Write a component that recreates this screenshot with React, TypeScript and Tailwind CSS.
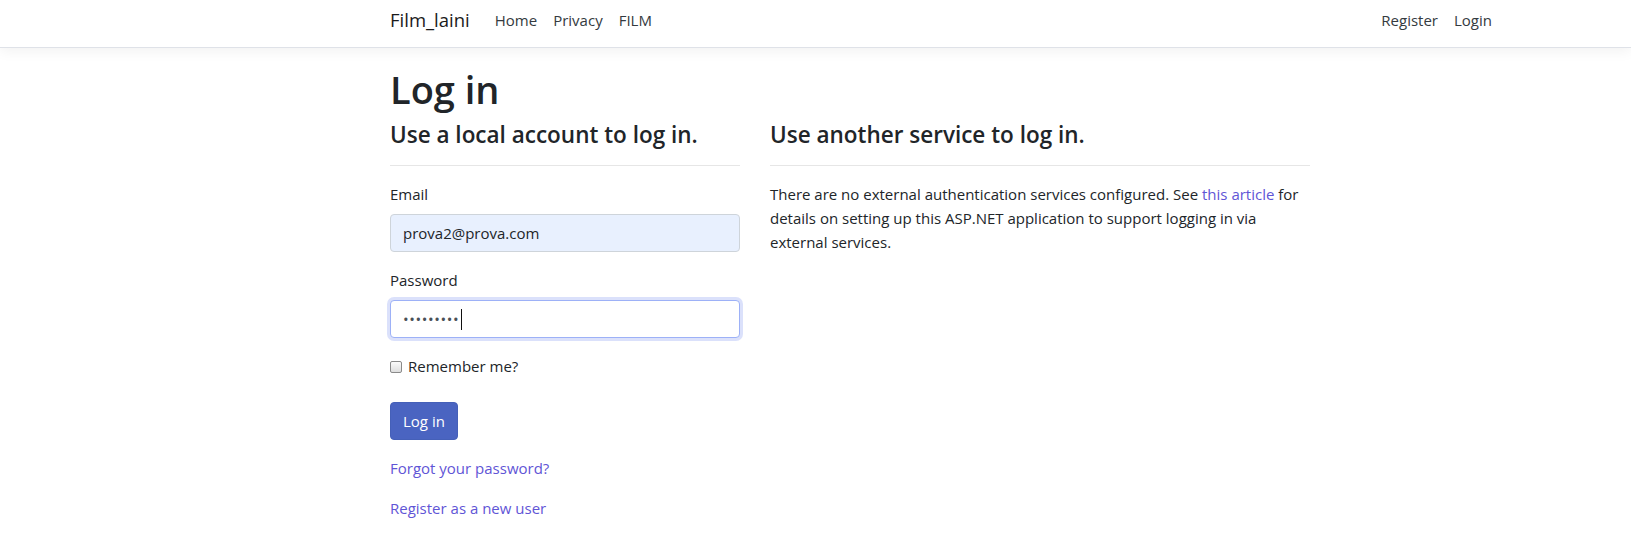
import React from "react";

const font = { fontFamily: '"Open Sans", "Noto Sans", Arial, sans-serif' };

export default function App() {
  return (
    <div className="min-h-[548px] bg-white text-[#212529] text-[15px] leading-[24px]" style={font}>
      <nav className="h-[48px] bg-white border-b border-[#dfe2e8] shadow-[0_4px_12px_rgba(0,0,0,0.05)]">
        <div className="ml-[375px] w-[1140px] px-[15px] h-full flex items-center pb-[8px]">
          <span className="text-[18.5px] leading-[28px] text-[#1a1a1a] mr-[17px]">Film_laini</span>
          <div className="flex items-center">
            <a className="px-[8px] text-[#343a40]">Home</a>
            <a className="px-[8px] text-[#343a40]">Privacy</a>
            <a className="px-[8px] text-[#343a40]">FILM</a>
          </div>
          <div className="ml-auto flex items-center">
            <a className="px-[8px] text-[#343a40]">Register</a>
            <a className="px-[8px] text-[#343a40]">Login</a>
          </div>
        </div>
      </nav>

      <main className="ml-[375px] w-[1140px] px-[15px] pt-[18px]">
        <h1 className="text-[38px] leading-[46px] font-semibold mb-[8px]">Log in</h1>
        <div className="flex gap-[30px]">
          <section className="w-[350px]">
            <h4 className="text-[22.5px] leading-[29px] font-semibold">Use a local account to log in.</h4>
            <hr className="mt-[16px] mb-[16px] border-0 border-t border-[#e6e6e6]" />
            <div className="mb-[16px]">
              <div className="mb-[8px]">Email</div>
              <div className="h-[38px] rounded-[4px] border border-[#ced4da] bg-[#e8f0fe] px-[12px] flex items-center text-[#212529]">
                prova2@prova.com
              </div>
            </div>
            <div className="mb-[16px]">
              <div className="mb-[8px]">Password</div>
              <div className="h-[38px] rounded-[4px] border border-[#9db1f7] bg-white px-[12px] flex items-center text-[#495057] shadow-[0_0_0_3px_rgba(124,148,242,0.28)]">
                <span className="tracking-[0.6px]">•••••••••</span>
                <span className="ml-[2px] w-[1px] h-[21px] bg-[#111]" />
              </div>
            </div>
            <div className="pb-[24px]">
              <div className="flex items-center h-[24px]">
                <span className="w-[12px] h-[12px] rounded-[2px] border border-[#8a8a8a] bg-gradient-to-b from-[#fbfbfb] to-[#dedede] mr-[6px] mt-[1px]" />
                <span>Remember me?</span>
              </div>
            </div>
            <div className="mb-[16px]">
              <button className="h-[38px] px-[12px] rounded-[4px] bg-[#4a64c1] border border-[#4560b8] text-white">
                Log in
              </button>
            </div>
            <p className="mb-[16px]">
              <a className="text-[#5f55d6]">Forgot your password?</a>
            </p>
            <p className="mb-[16px]">
              <a className="text-[#5f55d6]">Register as a new user</a>
            </p>
          </section>

          <section className="w-[540px]">
            <h4 className="text-[22.5px] leading-[29px] font-semibold">Use another service to log in.</h4>
            <hr className="mt-[16px] mb-[16px] border-0 border-t border-[#e6e6e6]" />
            <p className="whitespace-nowrap">
              There are no external authentication services configured. See{" "}
              <a className="text-[#5f55d6]">this article</a> for
              <br />
              details on setting up this ASP.NET application to support logging in via
              <br />
              external services.
            </p>
          </section>
        </div>
      </main>
    </div>
  );
}
